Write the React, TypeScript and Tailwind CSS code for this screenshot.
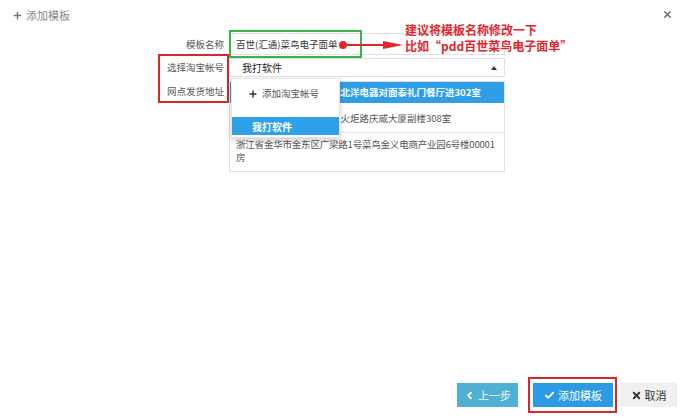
import { Check, ChevronLeft, Plus, X } from "lucide-react";

const font = { fontFamily: '"Noto Sans CJK SC", "Noto Sans", sans-serif' };

function Label({ text }: { text: string }) {
    return <div className="w-[225px] shrink-0 pr-[1px] text-right text-[9.5px] text-[#555]">{text}</div>;
}

function AddressList() {
    return (
        <div className="w-[276px] border border-[#e2e2e2] text-[9.5px] leading-[13px] text-[#555]">
            <div className="flex h-[21px] items-center bg-[#2e9fe6] px-[6px] font-bold whitespace-nowrap text-white">
                浙江省金华市义乌市稠城北洋电器对面泰礼门餐厅进302室
            </div>
            <div className="mt-[2px] flex h-[28px] items-center border-b border-[#e6e6e6] px-[6px] whitespace-nowrap">
                浙江省杭州市滨江区西兴火炬路庆威大厦副楼308室
            </div>
            <div className="h-[38px] px-[6px] pt-[5px]">
                <div className="tracking-[-0.2px] whitespace-nowrap">浙江省金华市金东区广梁路1号菜鸟金义电商产业园6号楼00001</div>
                <div>房</div>
            </div>
        </div>
    );
}

export default function App() {
    return (
        <div className="relative flex h-[417px] w-[690px] flex-col bg-white" style={font}>
            <div className="flex h-[30px] items-start justify-between px-[12px] pt-[7px]">
                <div className="flex items-center gap-[3px] text-[11px] text-[#888]">
                    <Plus size={11} strokeWidth={3} className="text-[#777]" />
                    <span>添加模板</span>
                </div>
                <X size={11} strokeWidth={3} className="mt-[2px] mr-[5px] text-[#666]" />
            </div>

            <div className="flex flex-1 flex-col pt-[3px]">
                <div className="flex items-center gap-[4px]">
                    <Label text="模板名称" />
                    <div className="flex h-[22px] w-[276px] items-center border border-[#e2e2e2] px-[6px] text-[9.5px] text-[#333]">
                        百世(汇通)菜鸟电子面单
                    </div>
                </div>
                <div className="mt-[3px] flex items-center gap-[4px]">
                    <Label text="选择淘宝帐号" />
                    <div className="flex h-[19px] w-[276px] items-center justify-between border border-[#e2e2e2] pr-[7px] pl-[12px] text-[10px] text-[#222]">
                        <span>我打软件</span>
                        <span className="h-0 w-0 border-x-[3px] border-b-[4px] border-x-transparent border-b-[#333]" />
                    </div>
                </div>
                <div className="mt-[4px] flex items-start gap-[4px]">
                    <div className="pt-[3px]">
                        <Label text="网点发货地址" />
                    </div>
                    <AddressList />
                </div>
            </div>

            <div className="flex items-center justify-end pr-[13px] pb-[10px]">
                <button className="flex h-[24px] w-[61px] items-center justify-center gap-[3px] bg-[#4fb0d6] text-[11px] text-white">
                    <ChevronLeft size={11} strokeWidth={4} />
                    上一步
                </button>
                <div className="relative ml-[15px]">
                    <button className="flex h-[24px] w-[80px] items-center justify-center gap-[3px] bg-[#2d9ae5] text-[11px] text-white">
                        <Check size={11} strokeWidth={4} />
                        添加模板
                    </button>
                    <span className="absolute -top-[6px] -right-[4px] -bottom-[6px] -left-[5px] border-2 border-[#d9262c]" />
                </div>
                <button className="ml-[7px] flex h-[24px] w-[57px] items-center justify-center gap-[3px] bg-[#f0f0f0] text-[11px] text-[#333]">
                    <X size={11} strokeWidth={4} />
                    取消
                </button>
            </div>

            {/* annotations */}
            <span className="absolute top-[30px] left-[229px] h-[28px] w-[133px] border-2 border-[#3bb34a]" />
            <span className="absolute top-[41px] left-[339px] h-[8px] w-[8px] rounded-full bg-[#e0262d]" />
            <span className="absolute top-[44px] left-[345px] h-[2px] w-[40px] bg-[#e0262d]" />
            <span className="absolute top-[41px] left-[383px] h-0 w-0 border-y-[4px] border-l-[20px] border-y-transparent border-l-[#e0262d]" />
            <div className="absolute top-[22px] left-[405px] text-[12px] leading-[16px] font-bold text-[#e0262d]">
                <div>建议将模板名称修改一下</div>
                <div>比如“pdd百世菜鸟电子面单”</div>
            </div>
            <span className="absolute top-[54px] left-[158px] h-[49px] w-[71px] border-2 border-[#d9262c]" />

            {/* account dropdown */}
            <div className="absolute top-[78px] left-[231px] h-[60px] w-[109px] border border-[#e4e4e4] bg-white shadow-[0_3px_6px_rgba(0,0,0,0.18)]">
                <div className="flex h-[28px] items-center gap-[4px] pt-[1px] pl-[16px] text-[9.5px] text-[#555]">
                    <Plus size={10} strokeWidth={3.5} className="text-[#333]" />
                    添加淘宝帐号
                </div>
                <div className="mt-[10px] flex h-[18px] items-center bg-[#2ea1e8] pl-[20px] text-[10px] font-bold text-white">
                    我打软件
                </div>
            </div>
        </div>
    );
}
